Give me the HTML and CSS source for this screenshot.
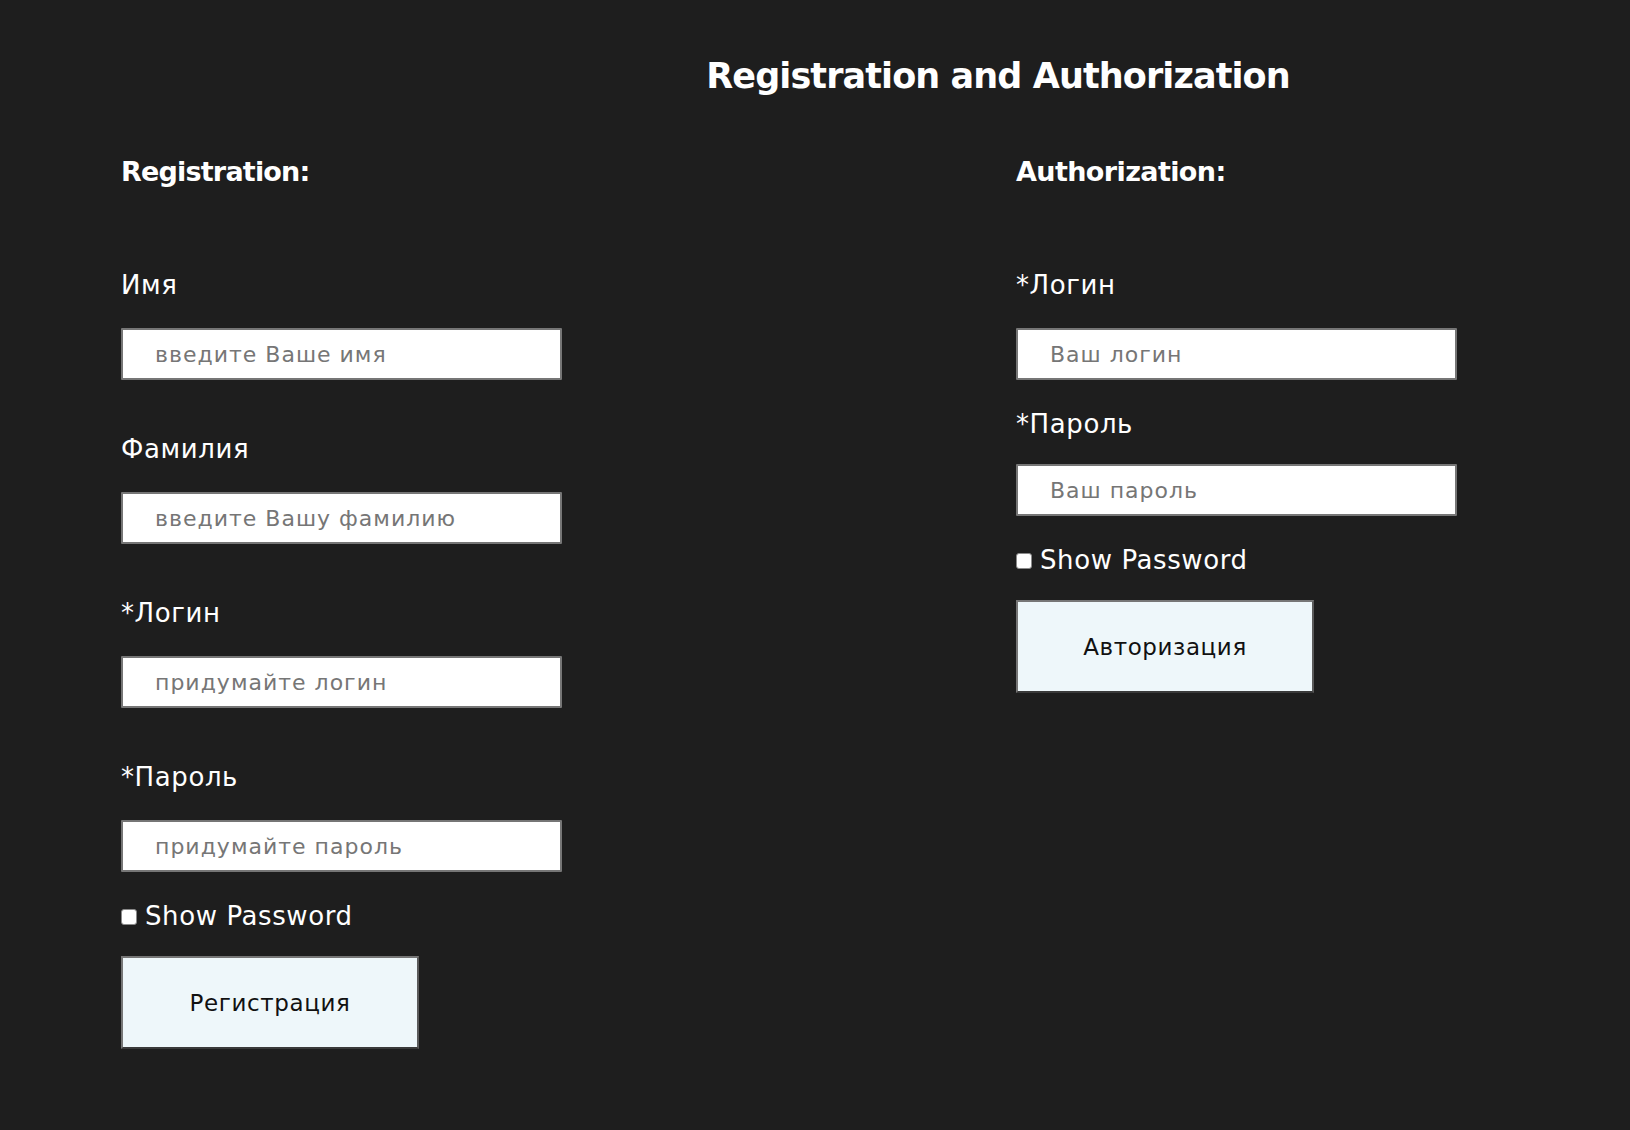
FILE: index.html
```html
<!DOCTYPE html>
<html lang="ru">
<head>
<meta charset="utf-8">
<title>Registration and Authorization</title>
<link rel="stylesheet" href="styles.css">
</head>
<body>
<header class="page-header">
  <h1 class="page-title">Registration and Authorization</h1>
</header>
<main class="forms">
  <section class="form-col form-col--reg">
    <h2 class="form-title">Registration:</h2>
    <form class="form form--reg">
      <label class="field-label" for="reg-name">Имя</label>
      <input class="field-input" id="reg-name" type="text" placeholder="введите Ваше имя">
      <label class="field-label" for="reg-surname">Фамилия</label>
      <input class="field-input" id="reg-surname" type="text" placeholder="введите Вашу фамилию">
      <label class="field-label" for="reg-login">*Логин</label>
      <input class="field-input" id="reg-login" type="text" placeholder="придумайте логин">
      <label class="field-label" for="reg-pass">*Пароль</label>
      <input class="field-input" id="reg-pass" type="password" placeholder="придумайте пароль">
      <label class="show-pass"><input class="check" type="checkbox">Show Password</label>
      <button class="submit-btn" type="button">Регистрация</button>
    </form>
  </section>
  <section class="form-col form-col--auth">
    <h2 class="form-title form-title--auth">Authorization:</h2>
    <form class="form form--auth">
      <label class="field-label" for="auth-login">*Логин</label>
      <input class="field-input" id="auth-login" type="text" placeholder="Ваш логин">
      <label class="field-label" for="auth-pass">*Пароль</label>
      <input class="field-input" id="auth-pass" type="password" placeholder="Ваш пароль">
      <label class="show-pass"><input class="check" type="checkbox">Show Password</label>
      <button class="submit-btn" type="button">Авторизация</button>
    </form>
  </section>
</main>
</body>
</html>
```
FILE: styles.css
```css
* { box-sizing: border-box; }

html, body {
  margin: 0;
  padding: 0;
  background: #1e1e1e;
  color: #ffffff;
  font-family: "DejaVu Sans", "Liberation Sans", sans-serif;
  min-height: 1130px;
}

.page-header {
  padding: 54px 0 0 366px;
  text-align: center;
}

.page-title {
  margin: 0;
  font-size: 35px;
  line-height: 44px;
  font-weight: 700;
  letter-spacing: -0.9px;
}

.forms {
  display: flex;
  padding: 57px 0 0 121px;
}

.form-col {
  display: flex;
  flex-direction: column;
}

.form-col--reg { width: 895px; }

.form-title {
  margin: 0 0 81px;
  font-size: 27px;
  line-height: 34px;
  font-weight: 700;
  letter-spacing: -0.8px;
}

.form-title--auth { letter-spacing: -0.6px; }

.form {
  display: flex;
  flex-direction: column;
  align-items: flex-start;
}

.field-label {
  font-size: 26px;
  line-height: 30px;
  letter-spacing: 0.6px;
  margin-bottom: 28px;
}

.field-input {
  width: 441px;
  height: 52px;
  margin: 0 0 54px;
  padding: 0 12px 0 32px;
  border: 2px solid #767676;
  border-radius: 1px;
  background: #ffffff;
  color: #222;
  font-family: inherit;
  font-size: 22px;
  letter-spacing: 1px;
  outline: none;
}

.field-input::placeholder { color: #767676; }

.form--reg .field-input:nth-of-type(4) { margin-bottom: 29px; }

.form--auth .field-input:nth-of-type(1) { margin-bottom: 29px; }
.form--auth .field-label:nth-of-type(2) { margin-bottom: 25px; }
.form--auth .field-input:nth-of-type(2) { margin-bottom: 29px; }

.show-pass {
  display: block;
  font-size: 26px;
  line-height: 30px;
  letter-spacing: 0.6px;
  margin-bottom: 25px;
}

.check {
  -webkit-appearance: none;
  appearance: none;
  display: inline-block;
  width: 16px;
  height: 16px;
  margin: 0 8px 0 0;
  vertical-align: baseline;
  background: #ffffff;
  border: 1px solid #8a8a8a;
  border-radius: 3px;
}

.submit-btn {
  width: 298px;
  height: 93px;
  padding: 0;
  background: #eef7fa;
  color: #111;
  border: 2px solid #767676;
  border-bottom-color: #3a3a3a;
  border-right-color: #5a5a5a;
  border-radius: 0;
  font-family: inherit;
  font-size: 23px;
  letter-spacing: 0.6px;
}
```
